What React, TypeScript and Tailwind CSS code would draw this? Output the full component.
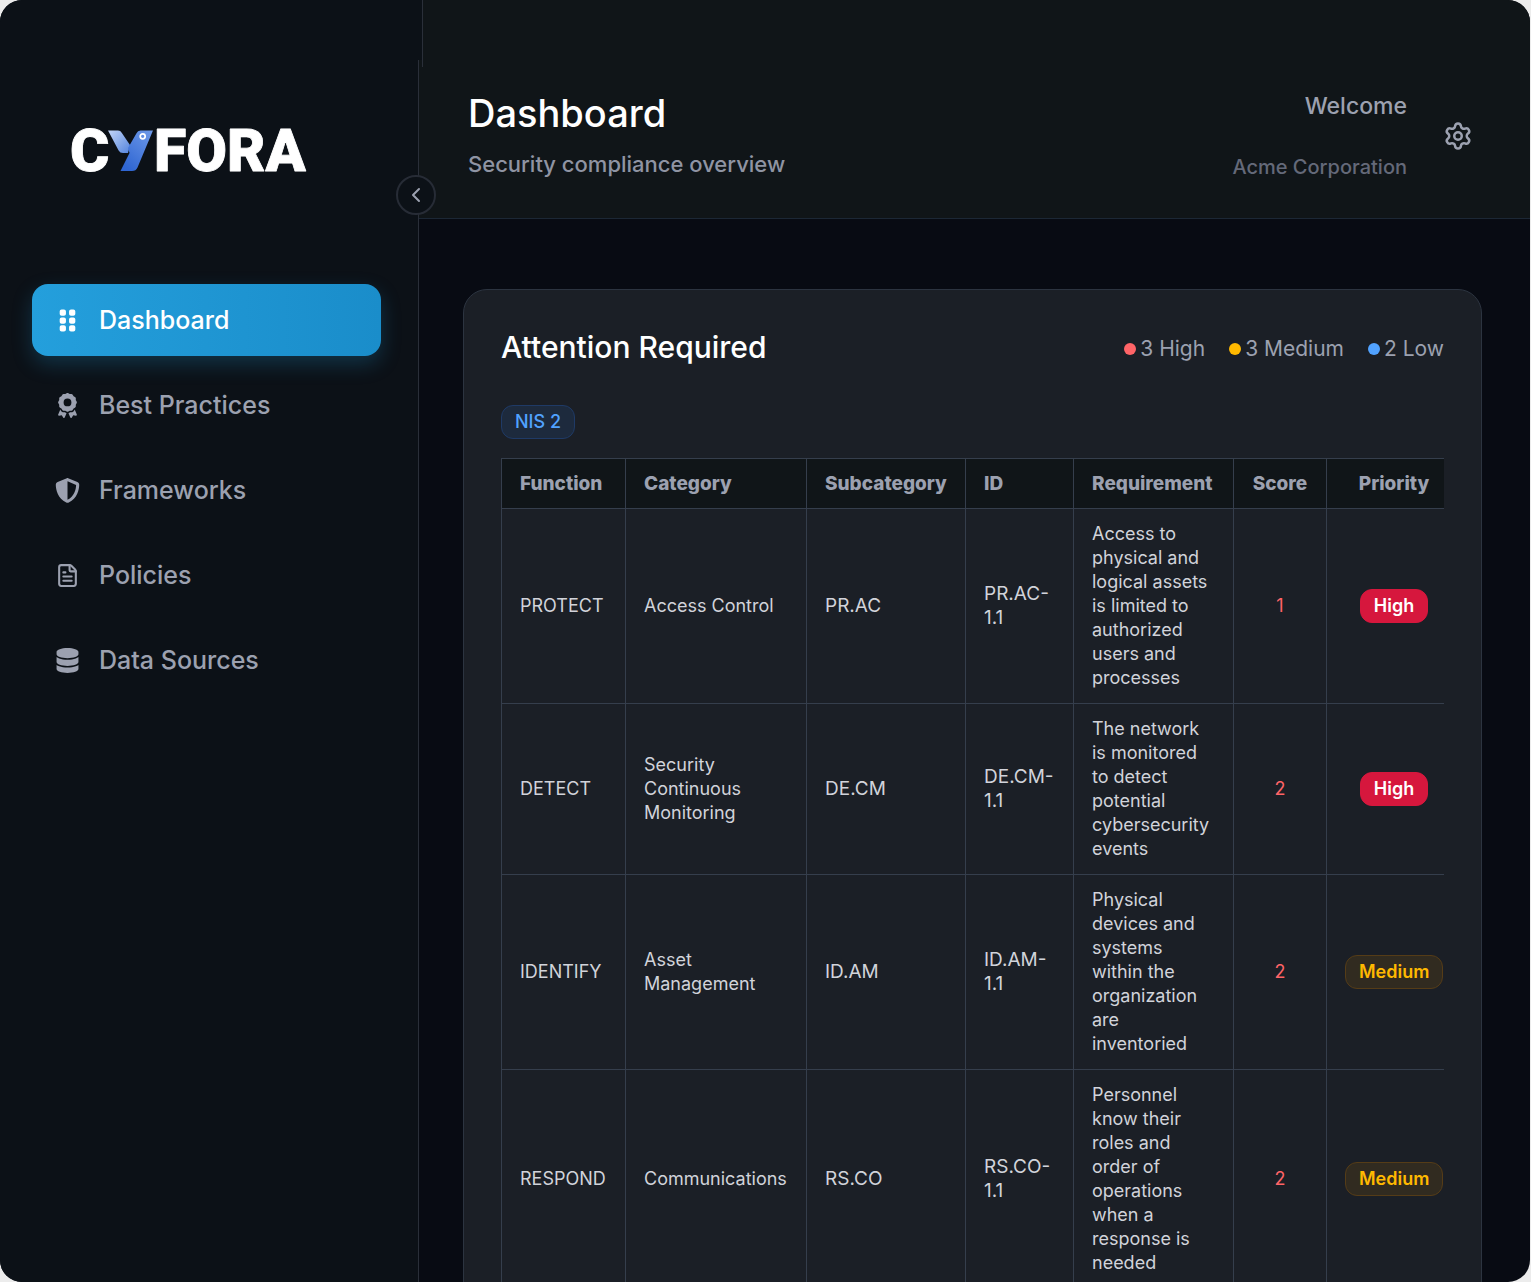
import { FaAward, FaDatabase, FaGripVertical, FaShieldHalved } from 'react-icons/fa6';
import { ChevronLeft, FileText, Settings } from 'lucide-react';

type Priority = 'High' | 'Medium';

type Finding = {
  fn: string;
  category: string;
  subcategory: string;
  id: string;
  requirement: string;
  score: number;
  priority: Priority;
};

const findings: Finding[] = [
  {
    fn: 'PROTECT',
    category: 'Access Control',
    subcategory: 'PR.AC',
    id: 'PR.AC-1.1',
    requirement: 'Access to physical and logical assets is limited to authorized users and processes',
    score: 1,
    priority: 'High',
  },
  {
    fn: 'DETECT',
    category: 'Security Continuous Monitoring',
    subcategory: 'DE.CM',
    id: 'DE.CM-1.1',
    requirement: 'The network is monitored to detect potential cybersecurity events',
    score: 2,
    priority: 'High',
  },
  {
    fn: 'IDENTIFY',
    category: 'Asset Management',
    subcategory: 'ID.AM',
    id: 'ID.AM-1.1',
    requirement: 'Physical devices and systems within the organization are inventoried',
    score: 2,
    priority: 'Medium',
  },
  {
    fn: 'RESPOND',
    category: 'Communications',
    subcategory: 'RS.CO',
    id: 'RS.CO-1.1',
    requirement: 'Personnel know their roles and order of operations when a response is needed',
    score: 2,
    priority: 'Medium',
  },
];

const navItems = [
  { label: 'Dashboard', icon: <FaGripVertical className="size-[25px]" />, active: true },
  { label: 'Best Practices', icon: <FaAward className="size-[25px]" />, active: false },
  { label: 'Frameworks', icon: <FaShieldHalved className="size-[25px]" />, active: false },
  { label: 'Policies', icon: <FileText className="size-[25px]" />, active: false },
  { label: 'Data Sources', icon: <FaDatabase className="size-[25px]" />, active: false },
];

const columns = [
  { label: 'Function', width: 'w-[124px]', align: 'text-left' },
  { label: 'Category', width: 'w-[181px]', align: 'text-left' },
  { label: 'Subcategory', width: 'w-[159px]', align: 'text-left' },
  { label: 'ID', width: 'w-[108px]', align: 'text-left' },
  { label: 'Requirement', width: 'w-[160px]', align: 'text-left' },
  { label: 'Score', width: 'w-[93px]', align: 'text-center' },
  { label: 'Priority', width: 'w-[135px]', align: 'text-center' },
];

const legend = [
  { label: '3 High', dot: 'bg-[#ff6467]' },
  { label: '3 Medium', dot: 'bg-[#ffb900]' },
  { label: '2 Low', dot: 'bg-[#51a2ff]' },
];

const badgeStyles: Record<Priority, string> = {
  High: 'border-[#d6173d] bg-[#d6173d] text-white',
  Medium: 'border-[#553c17] bg-[#312b20] text-[#ffb900]',
};

function Logo() {
  return (
    <svg viewBox="0 -16 244 80" className="h-20 w-[244px]" role="img" aria-label="Cyfora">
      <defs>
        <linearGradient id="logo-arm" x1="0" y1="0" x2="1" y2="1">
          <stop offset="0" stopColor="#c3d5f7" />
          <stop offset="1" stopColor="#5585de" />
        </linearGradient>
        <linearGradient id="logo-stem" x1="1" y1="0" x2="0.3" y2="1">
          <stop offset="0" stopColor="#6f9ae8" />
          <stop offset="1" stopColor="#2f66d3" />
        </linearGradient>
      </defs>
      <g
        fill="#fff"
        stroke="#fff"
        strokeWidth="0.8"
        strokeLinejoin="round"
        fontFamily="Roboto, sans-serif"
        fontWeight="900"
      >
        <text x="0" y="44" fontSize="60">
          C
        </text>
        <text x="84" y="44" fontSize="59">
          FORA
        </text>
      </g>
      <path
        d="M38 3.500h10q2.500 0 3.700 2.300L60 18l-2 8h-5q-3 0-4.400-2.600z"
        fill="url(#logo-arm)"
      />
      <path
        d="M66.500 6.200q1.200-2.700 4-2.700H83L67.500 40.500q-1.500 3.500-5.500 3.500H50.500l9-18-1.500-5z"
        fill="url(#logo-stem)"
      />
      <circle cx="72.700" cy="9.300" r="2.500" fill="none" stroke="#fff" strokeWidth="1.700" />
    </svg>
  );
}

function Sidebar() {
  return (
    <aside className="relative w-[419px] shrink-0 border-r border-[#2a2f39] bg-[#0c1117] px-8 pt-[111px]">
      {/* window strip above the sidebar is slightly wider than the sidebar itself */}
      <div className="absolute top-0 -right-[5px] h-[67px] w-[6px] border-r border-[#2a2f39]">
        <div className="h-[60px] bg-[#0c1117]" />
      </div>
      <div className="pl-[38px]">
        <Logo />
      </div>
      <nav className="mt-[93px] flex flex-col gap-[13px] pr-[5px]">
        {navItems.map((item) => (
          <a
            key={item.label}
            href="#"
            className={`flex h-[72px] items-center gap-[19px] rounded-2xl px-[23px] text-[25px] leading-8 font-medium ${
              item.active
                ? 'bg-linear-to-r from-[#249fdc] to-[#1a8dca] text-white shadow-[0_8px_20px_rgba(32,150,210,0.25)]'
                : 'text-[#9ca1b0]'
            }`}
          >
            {item.icon}
            {item.label}
          </a>
        ))}
      </nav>
      <button
        aria-label="Collapse sidebar"
        className="absolute top-[175px] -right-[18px] z-10 flex size-10 items-center justify-center rounded-full border-2 border-[#272c36] bg-[#0c1117] text-[#9ca1b0]"
      >
        <ChevronLeft className="size-6" />
      </button>
    </aside>
  );
}

function Header() {
  return (
    <header className="flex items-center justify-between border-b border-[#1c2735] bg-[#101518] pt-[88px] pr-[57px] pb-[34px] pl-[49px]">
      <div>
        <h1 className="text-[38px] leading-[50px] font-medium text-white">Dashboard</h1>
        <p className="mt-[10px] mb-1 text-[22px] leading-8 font-medium text-[#8f94a3]">Security compliance overview</p>
      </div>
      <div className="flex items-center gap-[36px]">
        <div className="text-right">
          <p className="text-[23px] leading-8 font-medium text-[#9ca1b0]">Welcome</p>
          <p className="mt-[29px] text-[20px] leading-8 font-medium text-[#646979]">Acme Corporation</p>
        </div>
        <button aria-label="Settings" className="text-[#9ca1b0]">
          <Settings className="size-[30px]" />
        </button>
      </div>
    </header>
  );
}

function FindingsTable() {
  return (
    <div className="mt-[19px] overflow-hidden">
      <table className="w-full min-w-[960px] table-fixed border-collapse text-[18px] leading-6">
        <thead className="bg-[#101518] text-[#9ca1b0]">
          <tr>
            {columns.map((col) => (
              <th
                key={col.label}
                className={`border border-[#353e4c] px-[18px] py-3 text-[19px] leading-[25px] font-extrabold ${col.width} ${col.align}`}
              >
                {col.label}
              </th>
            ))}
          </tr>
        </thead>
        <tbody className="text-[#d1d3da]">
          {findings.map((row) => (
            <tr key={row.id}>
              <td className="border border-[#353e4c] px-[18px] py-[13px]">{row.fn}</td>
              <td className="border border-[#353e4c] px-[18px] py-[13px]">{row.category}</td>
              <td className="border border-[#353e4c] px-[18px] py-[13px] text-[19px]">{row.subcategory}</td>
              <td className="border border-[#353e4c] px-[18px] py-[13px] text-[19px]">{row.id}</td>
              <td className="border border-[#353e4c] px-[18px] py-[13px]">{row.requirement}</td>
              <td className="border border-[#353e4c] px-[18px] py-[13px] text-center text-[#ff6467]">{row.score}</td>
              <td className="border border-[#353e4c] px-[18px] py-[13px] text-center">
                <span
                  className={`inline-block rounded-xl border px-[13px] py-1 font-semibold ${badgeStyles[row.priority]}`}
                >
                  {row.priority}
                </span>
              </td>
            </tr>
          ))}
        </tbody>
      </table>
    </div>
  );
}

export default function App() {
  return (
    <div className="h-screen bg-[#ececec] pr-px font-['Inter',sans-serif]">
      <div className="flex h-full overflow-hidden rounded-[22px] bg-[#080b13]">
        <Sidebar />
        <div className="min-w-0 flex-1">
          <Header />
          <main className="pt-[70px] pr-12 pl-11">
            <section className="rounded-3xl border border-[#2c3440] bg-[#1b1f26] px-[37px] pt-9 pb-9">
              <div className="flex items-center justify-between">
                <h2 className="text-[30px] leading-[42px] font-medium text-white">Attention Required</h2>
                <ul className="flex gap-6 pt-[3px] text-[21px] leading-8 text-[#9ca1b0]">
                  {legend.map((item) => (
                    <li key={item.label} className="flex items-center gap-1">
                      <span className={`size-3 rounded-full ${item.dot}`} />
                      {item.label}
                    </li>
                  ))}
                </ul>
              </div>
              <span className="mt-[37px] block w-fit rounded-xl border border-[#1f3a66] bg-[#1d2a3d] px-[13px] py-1 text-[18px] leading-6 font-medium text-[#51a2ff]">
                NIS 2
              </span>
              <FindingsTable />
            </section>
          </main>
        </div>
      </div>
    </div>
  );
}
